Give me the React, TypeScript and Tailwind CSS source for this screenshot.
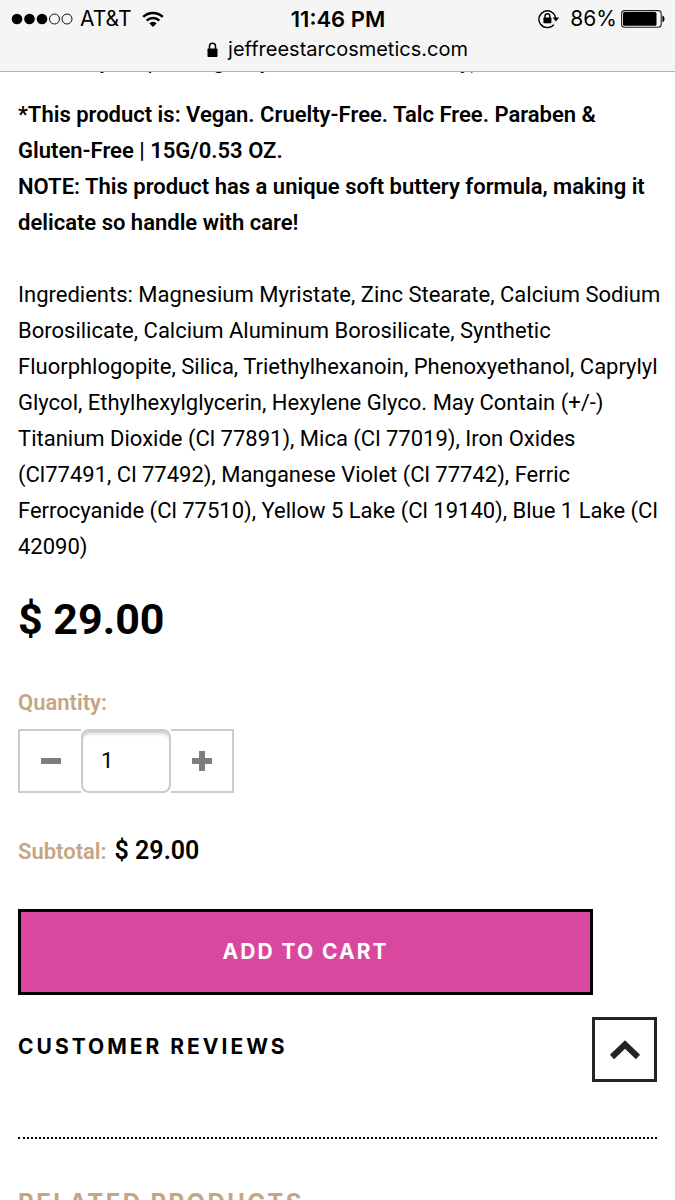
import { useState } from "react"

const PRICE = 29

const INGREDIENTS = [
  "Ingredients: Magnesium Myristate, Zinc Stearate, Calcium Sodium",
  "Borosilicate, Calcium Aluminum Borosilicate, Synthetic",
  "Fluorphlogopite, Silica, Triethylhexanoin, Phenoxyethanol, Caprylyl",
  "Glycol, Ethylhexylglycerin, Hexylene Glyco. May Contain (+/-)",
  "Titanium Dioxide (Cl 77891), Mica (Cl 77019), Iron Oxides",
  "(Cl77491, Cl 77492), Manganese Violet (Cl 77742), Ferric",
  "Ferrocyanide (Cl 77510), Yellow 5 Lake (Cl 19140), Blue 1 Lake (Cl",
  "42090)",
]

function StatusBar() {
  return (
    <div className="grid grid-cols-3 items-center pt-px pr-[10px] pl-[11px] h-9">
      <div className="flex items-center gap-[7px]">
        <svg width="62" height="12" viewBox="0 0 62 12" aria-hidden="true">
          <circle cx="6" cy="6" r="5.3" />
          <circle cx="18.5" cy="6" r="5.3" />
          <circle cx="31" cy="6" r="5.3" />
          <circle cx="43.5" cy="6" r="5" fill="none" stroke="#111" />
          <circle cx="56" cy="6" r="5" fill="none" stroke="#111" />
        </svg>
        <span>AT&amp;T</span>
        <svg className="ml-1" width="22" height="16" viewBox="0 0 22 16" aria-hidden="true">
          <path d="M1.2 5.900a14 14 0 0 1 19.6 0M4.700 9.600a9 9 0 0 1 12.600 0" fill="none" stroke="#000" strokeWidth="2.5" />
          <path d="M11 16l-3.700-3.700a5.200 5.200 0 0 1 7.400 0z" />
        </svg>
      </div>
      <div className="text-center text-[22px] font-semibold">11:46 PM</div>
      <div className="flex items-center justify-end">
        <svg className="mr-[10px]" width="22" height="20" viewBox="0 0 22 20" fill="none" stroke="#000" aria-hidden="true">
          <path d="M15.8 15.600a8.400 8.400 0 1 1 1.800-6.800" strokeWidth="1.4" />
          <path d="M14.600 8.600h6.600l-3.300 4z" fill="#000" stroke="none" />
          <rect x="5.4" y="8.6" width="8" height="5.6" rx="0.6" fill="#000" stroke="none" />
          <path d="M7 9V7.200a2.400 2.400 0 0 1 4.800 0V9" strokeWidth="1.4" />
        </svg>
        <span>86%</span>
        <svg className="ml-1" width="44" height="18" viewBox="0 0 44 18" aria-hidden="true">
          <rect x="0.6" y="0.6" width="39.6" height="16.6" rx="3" fill="none" stroke="#222" strokeWidth="1.1" />
          <rect x="2" y="2" width="33.5" height="13.8" rx="1.5" />
          <path d="M41.400 5.600c2.800.8 2.800 5.800 0 6.600z" />
        </svg>
      </div>
    </div>
  )
}

function BrowserHeader() {
  return (
    <header className="fixed inset-x-0 top-0 z-10 h-[72px] border-b border-[#b2b2b2] bg-[#f5f5f5] font-['Inter',sans-serif] text-[21px] leading-6 text-black">
      <StatusBar />
      <div className="flex items-center justify-center gap-[10px] pt-px">
        <svg width="11" height="15" viewBox="0 0 11 15" aria-hidden="true">
          <rect x="0.5" y="6.5" width="10" height="8.5" rx="0.8" />
          <path d="M2.500 7V4.200a3 3 0 0 1 6 0V7" fill="none" stroke="#000" strokeWidth="1.5" />
        </svg>
        <span className="text-[20px]">jeffreestarcosmetics.com</span>
      </div>
    </header>
  )
}

export default function App() {
  const [quantity, setQuantity] = useState(1)
  const subtotal = `$ ${(PRICE * quantity).toFixed(2)}`

  return (
    <div className="h-screen overflow-hidden bg-white font-['Roboto',sans-serif] text-[22px] leading-9 text-black">
      <BrowserHeader />
      <main className="px-[18px] pt-[43px]">
        <p>A creamy drop over glowy radiant finish all day)</p>

        <div className="mt-[18px] font-semibold">
          <p>
            *This product is: Vegan. Cruelty-Free. Talc Free. Paraben &amp; Gluten-Free | 15G/0.53 OZ.
          </p>
          <p>NOTE: This product has a unique soft buttery formula, making it delicate so handle with care!</p>
        </div>

        <p className="mt-9 whitespace-pre">{INGREDIENTS.join("\n")}</p>

        <div className="mt-7 text-[43px] leading-[52px] font-bold">$ 29.00</div>

        <label htmlFor="quantity" className="mt-10 block font-semibold text-[#c4a684]">
          Quantity:
        </label>
        <div className="mt-2 flex h-16">
          <button
            type="button"
            aria-label="Decrease quantity"
            onClick={() => setQuantity(Math.max(1, quantity - 1))}
            className="flex w-[63px] items-center justify-center border-2 border-r-0 border-[#cbcbcb]"
          >
            <span className="h-[6px] w-5 bg-[#7d7d7d]" />
          </button>
          <input
            id="quantity"
            type="text"
            value={quantity}
            onChange={(e) => setQuantity(Number(e.target.value) || 1)}
            className="w-[90px] rounded-lg border-2 border-[#cbcbcb] pl-[18px] shadow-[inset_0_5px_4px_-3px_#bdbdbd]"
          />
          <button
            type="button"
            aria-label="Increase quantity"
            onClick={() => setQuantity(quantity + 1)}
            className="flex w-[63px] items-center justify-center border-2 border-l-0 border-[#cbcbcb]"
          >
            <svg width="20" height="20" viewBox="0 0 20 20" fill="#7d7d7d" aria-hidden="true">
              <path d="M7 0h6v7h7v6h-7v7H7v-7H0V7h7z" />
            </svg>
          </button>
        </div>

        <div className="mt-10 flex items-baseline gap-2 font-semibold">
          <span className="text-[#c4a684]">Subtotal:</span>
          <span className="text-[25px]">{subtotal}</span>
        </div>

        <button
          type="button"
          className="mt-[39px] block h-[86px] w-9/10 border-[3px] border-black bg-[#da479e] font-['Inter',sans-serif] text-[21px] font-bold tracking-[2px] text-white"
        >
          ADD TO CART
        </button>

        <div className="mt-[22px] flex items-start justify-between">
          <h2 className="pt-3 font-['Inter',sans-serif] text-[21px] font-bold tracking-[3px]">CUSTOMER REVIEWS</h2>
          <button
            type="button"
            aria-label="Back to top"
            className="flex size-[65px] items-center justify-center border-[3px] border-[#242424]"
          >
            <svg width="32" height="22" viewBox="0 0 32 22" fill="none" stroke="#242424" strokeWidth="6" aria-hidden="true">
              <path d="M3 18L16 5.500L29 18" />
            </svg>
          </button>
        </div>

        <section className="mt-[55px] border-t-2 border-dotted border-black pt-[46px]">
          <h2 className="font-['Inter',sans-serif] text-[24px] font-bold tracking-widest text-[#c4a684]">
            RELATED PRODUCTS
          </h2>
        </section>
      </main>
    </div>
  )
}
